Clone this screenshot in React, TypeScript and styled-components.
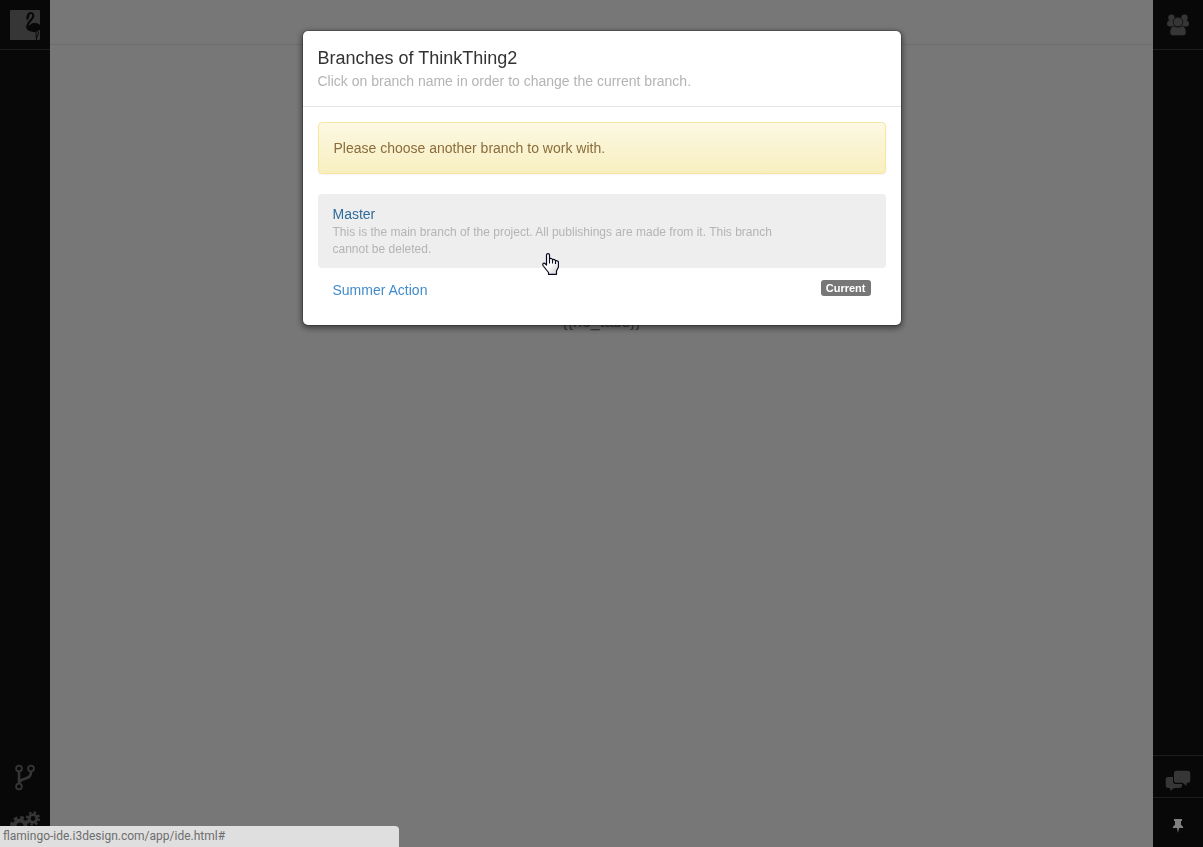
import React from "react";
import styled, { createGlobalStyle } from "styled-components";

const GlobalStyle = createGlobalStyle`
  *, *::before, *::after { box-sizing: border-box; }
  body {
    margin: 0;
    background: #eee;
    color: #333;
    font-family: "Liberation Sans", Arial, sans-serif;
    font-size: 14px;
    line-height: 20px;
  }
`;

const Workspace = styled.div`
  display: flex;
  min-height: 100vh;
`;

const SideBar = styled.nav`
  display: flex;
  flex-direction: column;
  flex: 0 0 50px;
  background: #101010;
`;

const BarButton = styled.button<{ $height: number; $line?: "top" | "bottom"; $bright?: boolean }>`
  display: flex;
  align-items: center;
  justify-content: center;
  width: 50px;
  height: ${(p) => p.$height}px;
  padding: 0;
  border: 0 solid #3a3a3a;
  border-top-width: ${(p) => (p.$line === "top" ? 1 : 0)}px;
  border-bottom-width: ${(p) => (p.$line === "bottom" ? 1 : 0)}px;
  background: transparent;
  color: ${(p) => (p.$bright ? "#fff" : "#6c6c6c")};
`;

const LowerButton = styled(BarButton)`
  padding-top: 8px;
`;

const Spacer = styled.div`
  flex: 1;
`;

const Main = styled.main`
  flex: 1;
  min-width: 0;
`;

const TabStrip = styled.header`
  height: 45px;
  border-bottom: 1px solid #dadada;
`;

const EmptyMessage = styled.p`
  margin: 0;
  padding-top: 267px;
  text-align: center;
  color: #777;
  font-size: 16px;
`;

const Backdrop = styled.div`
  position: fixed;
  inset: 0;
  padding: 30px 10px;
  background: rgba(0, 0, 0, 0.5);
`;

const Dialog = styled.section`
  max-width: 600px;
  margin: 0 auto;
  border: 1px solid rgba(0, 0, 0, 0.2);
  border-radius: 6px;
  background: #fff;
  background-clip: padding-box;
  box-shadow: 0 2px 6px rgba(0, 0, 0, 0.5);
`;

const DialogHeader = styled.header`
  padding: 15px;
  border-bottom: 1px solid #e5e5e5;
`;

const Title = styled.h1`
  margin: 0;
  font-size: 18px;
  line-height: 25px;
  font-weight: 400;
`;

const Subtitle = styled.p`
  margin: 0;
  color: #b4b4b4;
`;

const DialogBody = styled.div`
  padding: 15px;
`;

const Alert = styled.div`
  margin-bottom: 20px;
  padding: 15px;
  border: 1px solid #f5e79e;
  border-radius: 4px;
  background: linear-gradient(#fcf8e3, #f8efc0);
  box-shadow: inset 0 1px 0 rgba(255, 255, 255, 0.25), 0 1px 2px rgba(0, 0, 0, 0.05);
  color: #8a6d3b;
`;

const BranchList = styled.ul`
  display: grid;
  gap: 2px;
  margin: 0;
  padding: 0;
  list-style: none;
`;

const BranchItem = styled.li`
  position: relative;
`;

const BranchLink = styled.a<{ $hovered?: boolean }>`
  display: flex;
  align-items: flex-start;
  justify-content: space-between;
  padding: 10px 15px;
  border-radius: 4px;
  background: ${(p) => (p.$hovered ? "#eee" : "transparent")};
  color: ${(p) => (p.$hovered ? "#306b9d" : "#428bca")};
  text-decoration: none;
`;

const BranchText = styled.div`
  flex: 0 1 84%;
`;

const Description = styled.p`
  margin: 0;
  color: #b4b4b4;
  font-size: 12px;
  line-height: 17px;
`;

const Badge = styled.span`
  padding: 0 5px;
  border-radius: 3px;
  background: #777;
  color: #fff;
  font-size: 11px;
  line-height: 16px;
  font-weight: 700;
`;

const HandPointer = styled.svg`
  position: absolute;
  left: 224px;
  top: 59px;
`;

const StatusBubble = styled.div`
  position: fixed;
  left: 0;
  bottom: 0;
  width: 399px;
  max-width: 100%;
  height: 21px;
  padding: 0 3px;
  border-top-right-radius: 4px;
  background: #dfdfdf;
  color: #6e6e6e;
  font-family: Roboto, "Open Sans", sans-serif;
  font-size: 12px;
  line-height: 21px;
`;

const FlamingoLogo = () => (
  <svg width="30" height="30" viewBox="0 0 30 30" aria-hidden="true">
    <rect width="30" height="30" rx="1" fill="#6c6c6c" />
    <path
      d="M17.8 6.5C18 4 19.500 3 21 3 23.500 3 23.800 6 22.500 8 21 10.500 17.500 12.500 17.500 16"
      fill="none"
      stroke="#101010"
      strokeWidth="2.200"
    />
    <path d="M16.800 5.500 19.500 5.500C19.200 7.500 18.500 9 17 10.500 16.200 9 16.200 7 16.800 5.500Z" fill="#101010" />
    <path
      d="M16.300 15.500C18 16.500 19 15.800 20.500 14.500 23 12.500 27 12.500 30 15V20C28.500 19.500 27.500 21.500 25.500 22 21 22 15 20.500 16.300 15.500Z"
      fill="#101010"
    />
    <path d="M25.800 21 26.500 30M28 20.500 28.300 24.500 26.500 28" fill="none" stroke="#101010" strokeWidth="1" />
  </svg>
);

const PeopleIcon = () => (
  <svg width="24" height="22" viewBox="0 0 24 22" fill="currentColor" aria-hidden="true">
    <circle cx="5.500" cy="3.800" r="3.200" />
    <circle cx="18.500" cy="3.800" r="3.200" />
    <path d="M3 6.500H8L9 12.500H4C2 12.500 1 11.500 1 10 1 8.500 1.500 7 3 6.500Z" />
    <path d="M21 6.500H16L15 12.500H20C22 12.500 23 11.500 23 10 23 8.500 22.500 7 21 6.500Z" />
    <path
      d="M8 12C9.500 13.500 14.500 13.500 16 12 18.500 12.500 20 14.500 20 18 20 20.500 19 21.500 17 21.500H7C5 21.500 4 20.500 4 18 4 14.500 5.500 12.500 8 12Z"
      stroke="#202020"
      strokeWidth=".6"
    />
    <circle cx="12" cy="8" r="4.800" stroke="#202020" strokeWidth=".8" />
  </svg>
);

const ForkIcon = () => (
  <svg width="22" height="28" viewBox="0 0 22 28" fill="none" stroke="currentColor" aria-hidden="true">
    <g strokeWidth="1.800">
      <circle cx="5" cy="4.500" r="2.900" />
      <circle cx="17" cy="4.500" r="2.900" />
      <circle cx="5" cy="22.500" r="2.900" />
    </g>
    <path d="M5 7.500V19.500M17 7.500C17 13.500 14 13.500 10 15 7 16 5 16.500 5 19.500" strokeWidth="2.600" />
  </svg>
);

const GearsIcon = () => (
  <svg width="32" height="34" viewBox="0 0 32 34" fill="none" stroke="currentColor" aria-hidden="true">
    <circle cx="11" cy="16" r="5.500" strokeWidth="4" />
    <circle cx="11" cy="16" r="8.500" strokeWidth="3" strokeDasharray="3.700 2.976" />
    <circle cx="24" cy="8.500" r="3.800" strokeWidth="2.800" />
    <circle cx="24" cy="8.500" r="6" strokeWidth="2.400" strokeDasharray="2.300 2.412" />
  </svg>
);

const ChatIcon = () => (
  <svg width="26" height="22" viewBox="0 0 26 22" fill="currentColor" aria-hidden="true">
    <path d="M3 7H8V11.500C8 13 9 14 10.500 14H17V15.500C17 17 16 18 14.500 18H9L5.500 21 5 18H3C1.500 18 .7 17 .7 15.500V9.500C.7 8 1.500 7 3 7Z" />
    <path d="M11.500.8H22.500C24.500.8 25.300 2 25.300 3.500V10C25.300 12 24.300 12.800 22.500 12.800H21.700L21.500 16 17.500 12.800H11.500C9.800 12.800 9 12 9 10.300V3.500C9 1.800 9.800.8 11.500.8Z" />
  </svg>
);

const PinIcon = () => (
  <svg width="12" height="16" viewBox="0 0 12 16" fill="currentColor" aria-hidden="true">
    <path d="M2 0H10V2H9V6C10.500 6.500 11.200 7.500 11.200 9H7L6 14 5 9H.8C.8 7.500 1.500 6.500 3 6V2H2Z" />
  </svg>
);

const Pointer = () => (
  <HandPointer width="17" height="22" viewBox="0 0 17 22" aria-hidden="true">
    <defs>
      <linearGradient id="hand" x1="0" y1="0" x2="1" y2="1">
        <stop offset=".5" stopColor="#fff" />
        <stop offset="1" stopColor="#ccc" />
      </linearGradient>
    </defs>
    <path
      d="M4.500 12V2C4.500.2 7.500.2 7.500 2V6C8.500 5 10.500 5.300 10.500 7 11.500 6 13.500 6.500 13.500 8 15 7.300 16.500 8 16.500 9.500V14L14.500 18V21.300H6.500V19.500L4.500 17 1 12.500C.2 10.500 2 9.300 3.500 11Z"
      fill="url(#hand)"
      stroke="#0a0a20"
      strokeWidth="1.200"
      strokeLinejoin="round"
    />
    <path d="M7.500 6V10.500M10.500 7V10.500M13.500 8V11" stroke="#0a0a20" strokeWidth="1.100" />
  </HandPointer>
);

export default function App() {
  return (
    <>
      <GlobalStyle />
      <Workspace>
        <SideBar aria-label="Project">
          <BarButton $height={50} $line="bottom" aria-label="Home"><FlamingoLogo /></BarButton>
          <Spacer />
          <BarButton $height={42} aria-label="Branches"><ForkIcon /></BarButton>
          <LowerButton $height={48} aria-label="Settings"><GearsIcon /></LowerButton>
        </SideBar>
        <Main>
          <TabStrip />
          <EmptyMessage>{"{{no_tabs}}"}</EmptyMessage>
        </Main>
        <SideBar aria-label="Team">
          <BarButton $height={50} $line="bottom" aria-label="People"><PeopleIcon /></BarButton>
          <Spacer />
          <LowerButton $height={42} $line="top" aria-label="Chat"><ChatIcon /></LowerButton>
          <LowerButton $height={50} $line="top" $bright aria-label="Pin"><PinIcon /></LowerButton>
        </SideBar>
      </Workspace>
      <Backdrop>
        <Dialog role="dialog" aria-labelledby="dialog-title">
          <DialogHeader>
            <Title id="dialog-title">Branches of ThinkThing2</Title>
            <Subtitle>Click on branch name in order to change the current branch.</Subtitle>
          </DialogHeader>
          <DialogBody>
            <Alert role="alert">Please choose another branch to work with.</Alert>
            <BranchList>
              <BranchItem>
                <BranchLink href="#" $hovered>
                  <BranchText>
                    Master
                    <Description>
                      This is the main branch of the project. All publishings are made from it. This branch cannot be
                      deleted.
                    </Description>
                  </BranchText>
                </BranchLink>
                <Pointer />
              </BranchItem>
              <BranchItem>
                <BranchLink href="#">
                  <BranchText>Summer Action</BranchText>
                  <Badge>Current</Badge>
                </BranchLink>
              </BranchItem>
            </BranchList>
          </DialogBody>
        </Dialog>
      </Backdrop>
      <StatusBubble>flamingo-ide.i3design.com/app/ide.html#</StatusBubble>
    </>
  );
}
